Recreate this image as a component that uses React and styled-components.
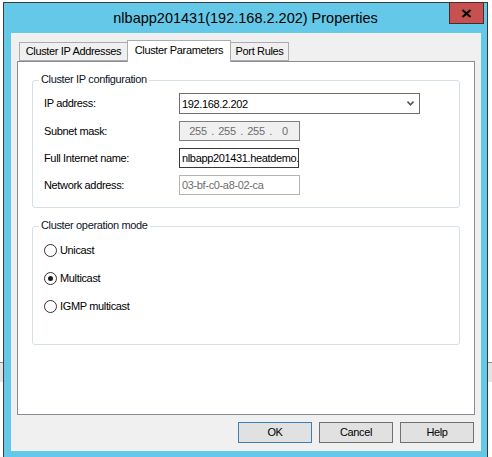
import React from 'react';
import styled, { createGlobalStyle } from 'styled-components';

const GlobalStyle = createGlobalStyle`
  html, body {
    margin: 0;
    padding: 0;
    overflow: hidden;
  }
  body {
    font-family: "Liberation Sans", Arial, sans-serif;
    background:
      linear-gradient(to bottom, transparent 362px, #8c8c8c 362px, #8c8c8c 363px, #e4e4e4 363px, #e4e4e4 382px, transparent 382px),
      #ffffff;
  }
`;

const Window = styled.div`
  box-sizing: border-box;
  width: 485px;
  margin: 2px 0 0 3px;
  border: 1px solid #3a3a3a;
  border-bottom: none;
  background: #64c9e9;
  padding: 0 6px 8px 7px;
`;

const TitleBar = styled.div`
  position: relative;
  height: 30px;
  margin: 0 -6px 0 -7px;
  display: flex;
  align-items: center;
  justify-content: center;
  font-size: 14.5px;
  color: #000;
`;

const CloseButton = styled.div`
  position: absolute;
  top: -1px;
  right: 3px;
  box-sizing: border-box;
  width: 35px;
  height: 22px;
  background: #c75050;
  border: 1px solid #4d2a2a;
  display: flex;
  align-items: center;
  justify-content: center;
`;

const Client = styled.div`
  box-sizing: border-box;
  height: 418px;
  background: #f0f0f0;
  padding: 7px 6px 8px 6px;
  font-size: 11px;
  letter-spacing: -0.35px;
  color: #000;
`;

const TabStrip = styled.div`
  display: flex;
  align-items: flex-end;
  height: 21px;
  padding-left: 2px;
`;

const Tab = styled.div`
  box-sizing: border-box;
  width: ${p => p.w}px;
  height: ${p => (p.active ? 22 : 19)}px;
  margin-left: ${p => (p.first ? 0 : -1)}px;
  margin-bottom: ${p => (p.active ? -1 : 0)}px;
  border: 1px solid #acacac;
  border-bottom: ${p => (p.active ? 'none' : '1px solid #acacac')};
  background: ${p => (p.active ? '#ffffff' : '#f0f0f0')};
  position: relative;
  z-index: ${p => (p.active ? 2 : 0)};
  text-align: center;
  line-height: 13px;
  padding-top: ${p => (p.active ? 3 : 2)}px;
  white-space: nowrap;
`;

const Panel = styled.div`
  position: relative;
  z-index: 1;
  box-sizing: border-box;
  height: 354px;
  background: #ffffff;
  border: 1px solid #898c95;
  padding: 18px 14px 0 14px;
`;

const GroupBox = styled.div`
  position: relative;
  border: 1px solid #d5dfe5;
  border-radius: 3px;
  padding: ${p => p.pad};
  margin-bottom: 18px;
`;

const Caption = styled.span`
  position: absolute;
  top: -8px;
  left: 6px;
  padding: 0 2px;
  background: #ffffff;
  line-height: 13px;
  color: #0c1426;
`;

const FieldGrid = styled.div`
  display: grid;
  grid-template-columns: 135px 1fr;
  row-gap: 7px;
  align-items: center;
`;

const Label = styled.div`
  line-height: 13px;
  white-space: nowrap;
`;

const Field = styled.div`
  box-sizing: border-box;
  width: ${p => p.w || 121}px;
  height: ${p => p.h || 20}px;
  border: 1px solid ${p => p.border};
  background: ${p => p.bg || '#ffffff'};
  color: ${p => p.color || '#000'};
  padding-left: 2px;
  display: flex;
  align-items: center;
  overflow: hidden;
  white-space: nowrap;
`;

const ComboText = styled.span`
  flex: 1;
`;

const Chevron = styled.svg`
  margin-right: 5px;
`;

const IpCell = styled.span`
  width: 20px;
  text-align: center;
`;

const IpDot = styled.span`
  width: 9px;
  text-align: center;
`;

const RadioList = styled.div`
  display: flex;
  flex-direction: column;
  gap: 15px;
`;

const RadioRow = styled.div`
  display: flex;
  align-items: center;
  gap: 3px;
  height: 13px;
  line-height: 13px;
`;

const RadioCircle = styled.span`
  box-sizing: border-box;
  width: 13px;
  height: 13px;
  border-radius: 50%;
  border: 1px solid #333333;
  background: #ffffff;
  display: flex;
  align-items: center;
  justify-content: center;
  &::after {
    content: '';
    width: 5px;
    height: 5px;
    border-radius: 50%;
    background: ${p => (p.checked ? '#1a1a1a' : 'transparent')};
  }
`;

const ButtonRow = styled.div`
  display: flex;
  justify-content: flex-end;
  gap: 7px;
  margin-top: 7px;
  padding-right: 1px;
`;

const Button = styled.div`
  box-sizing: border-box;
  width: 74px;
  height: 21px;
  border: 1px solid ${p => (p.primary ? '#3c7fb1' : '#707070')};
  background: #e1e1e1;
  display: flex;
  align-items: center;
  justify-content: center;
  line-height: 13px;
`;

const ipParts = ['255', '255', '255', '0'];

export default function App() {
  return (
    <>
      <GlobalStyle />
      <Window>
        <TitleBar>
          nlbapp201431(192.168.2.202) Properties
          <CloseButton>
            <svg width="11" height="9" viewBox="0 0 11 9">
              <path d="M1.5 1 L9.5 8 M9.5 1 L1.5 8" stroke="#000" strokeWidth="2.2" />
            </svg>
          </CloseButton>
        </TitleBar>
        <Client>
          <TabStrip>
            <Tab first w={109}>Cluster IP Addresses</Tab>
            <Tab active w={104}>Cluster Parameters</Tab>
            <Tab w={59}>Port Rules</Tab>
          </TabStrip>
          <Panel>
            <GroupBox pad="12px 11px 12px 11px">
              <Caption>Cluster IP configuration</Caption>
              <FieldGrid>
                <Label>IP address:</Label>
                <Field w={241} h={21} border="#6e6e6e">
                  <ComboText>192.168.2.202</ComboText>
                  <Chevron width="7" height="5" viewBox="0 0 7 5">
                    <path d="M0.5 0.5 L3.5 3.8 L6.5 0.5" fill="none" stroke="#555" strokeWidth="1.6" />
                  </Chevron>
                </Field>
                <Label>Subnet mask:</Label>
                <Field border="#7f7f7f" bg="#f0f0f0" color="#6d6d6d">
                  <span style={{ width: 6 }} />
                  {ipParts.map((p, i) => (
                    <React.Fragment key={i}>
                      <IpCell>{p}</IpCell>
                      {i < 3 && <IpDot>.</IpDot>}
                    </React.Fragment>
                  ))}
                </Field>
                <Label>Full Internet name:</Label>
                <Field w={120} border="#3a3a3a">nlbapp201431.heatdemo.local</Field>
                <Label>Network address:</Label>
                <Field border="#b4b4b4" color="#6d6d6d">03-bf-c0-a8-02-ca</Field>
              </FieldGrid>
            </GroupBox>
            <GroupBox pad="17px 11px 31px 11px">
              <Caption>Cluster operation mode</Caption>
              <RadioList>
                <RadioRow><RadioCircle />Unicast</RadioRow>
                <RadioRow><RadioCircle checked />Multicast</RadioRow>
                <RadioRow><RadioCircle />IGMP multicast</RadioRow>
              </RadioList>
            </GroupBox>
          </Panel>
          <ButtonRow>
            <Button primary>OK</Button>
            <Button>Cancel</Button>
            <Button>Help</Button>
          </ButtonRow>
        </Client>
      </Window>
    </>
  );
}
